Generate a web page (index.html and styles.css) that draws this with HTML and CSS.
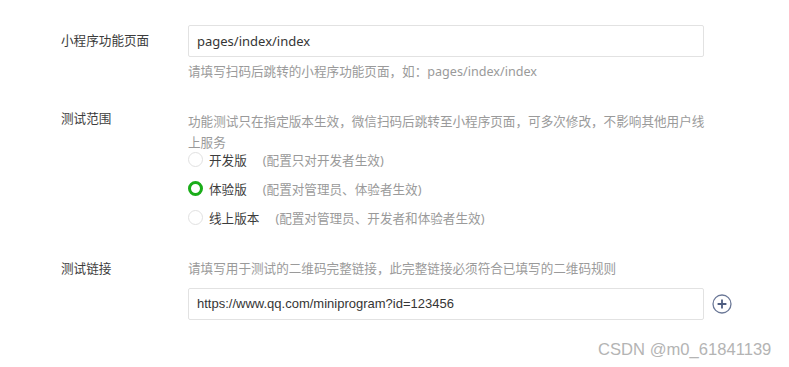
FILE: index.html
```html
<!DOCTYPE html>
<html lang="zh-CN">
<head>
    <meta charset="UTF-8">
    <meta name="viewport" content="width=device-width, initial-scale=1.0">
    <title>测试设置</title>
    <link rel="stylesheet" href="styles.css">
</head>
<body>
<div class="form">
    <div class="form-row row-page">
        <label class="form-label label-input">小程序功能页面</label>
        <div class="form-field">
            <div class="input">pages/index/index</div>
            <p class="hint">请填写扫码后跳转的小程序功能页面，如：pages/index/index</p>
        </div>
    </div>

    <div class="form-row row-scope">
        <label class="form-label">测试范围</label>
        <div class="form-field">
            <p class="hint desc">功能测试只在指定版本生效，微信扫码后跳转至小程序页面，可多次修改，不影响其他用户线上服务</p>
            <div class="radio">
                <span class="radio-dot"></span>
                <span class="radio-name">开发版</span>
                <span class="radio-tip">(配置只对开发者生效)</span>
            </div>
            <div class="radio checked">
                <span class="radio-dot"></span>
                <span class="radio-name">体验版</span>
                <span class="radio-tip">(配置对管理员、体验者生效)</span>
            </div>
            <div class="radio">
                <span class="radio-dot"></span>
                <span class="radio-name">线上版本</span>
                <span class="radio-tip">(配置对管理员、开发者和体验者生效)</span>
            </div>
        </div>
    </div>

    <div class="form-row row-link">
        <label class="form-label">测试链接</label>
        <div class="form-field">
            <p class="hint">请填写用于测试的二维码完整链接，此完整链接必须符合已填写的二维码规则</p>
            <div class="link-line">
                <div class="input input-url">https://www.qq.com/miniprogram?id=123456</div>
                <span class="add-btn">
                    <svg width="20" height="20" viewBox="0 0 20 20">
                        <circle cx="10" cy="10" r="9" fill="none" stroke="#6b7897" stroke-width="1.3"/>
                        <path d="M10 5.6v8.8M5.6 10h8.8" stroke="#4e5d80" stroke-width="1.8" fill="none"/>
                    </svg>
                </span>
            </div>
        </div>
    </div>
</div>

<div class="watermark">CSDN @m0_61841139</div>
</body>
</html>
```

FILE: styles.css
```css
body {
    margin: 0;
    background: #fff;
    font-family: "Noto Sans", "Noto Sans CJK SC", sans-serif;
    font-size: 12.6px;
    color: #3c3c3c;
}
.form {
    padding: 25px 0 0 61px;
}
.form-row {
    display: flex;
}
.form-label {
    width: 127px;
    flex-shrink: 0;
    line-height: 20px;
}
.label-input {
    padding-top: 6px;
}
.form-field {
    width: 516px;
}
.input {
    box-sizing: border-box;
    height: 32px;
    line-height: 30px;
    padding: 0 8px;
    border: 1px solid #e2e2e2;
    border-radius: 2px;
    font-size: 13px;
    color: #353535;
}
.input-url {
    width: 516px;
    flex-shrink: 0;
    font-family: "Liberation Sans", Arial, sans-serif;
}
.hint {
    margin: 5px 0 0;
    line-height: 20px;
    color: #9a9a9a;
}
.desc {
    margin: 0 -8px -4px 0;
    padding-top: 2px;
    line-height: 21px;
}
.row-scope {
    margin-top: 27px;
}
.radio {
    display: flex;
    align-items: center;
    height: 20px;
    margin-top: 9px;
}
.radio:first-of-type {
    margin-top: 0;
}
.radio-dot {
    box-sizing: border-box;
    width: 15px;
    height: 15px;
    margin-right: 6px;
    border: 1px solid #e1e1e1;
    border-radius: 50%;
}
.checked .radio-dot {
    border: 3px solid #1aad19;
}
.radio-name {
    margin-right: 16px;
}
.radio-tip {
    color: #9a9a9a;
}
.row-link {
    margin-top: 32px;
}
.row-link .hint {
    margin-top: 0;
}
.link-line {
    display: flex;
    align-items: center;
    margin-top: 9px;
}
.add-btn {
    display: flex;
    margin-left: 8px;
}
.watermark {
    position: absolute;
    left: 598px;
    top: 340px;
    font-family: "Liberation Sans", Arial, sans-serif;
    font-size: 16.6px;
    color: #b4b4b4;
}
```
